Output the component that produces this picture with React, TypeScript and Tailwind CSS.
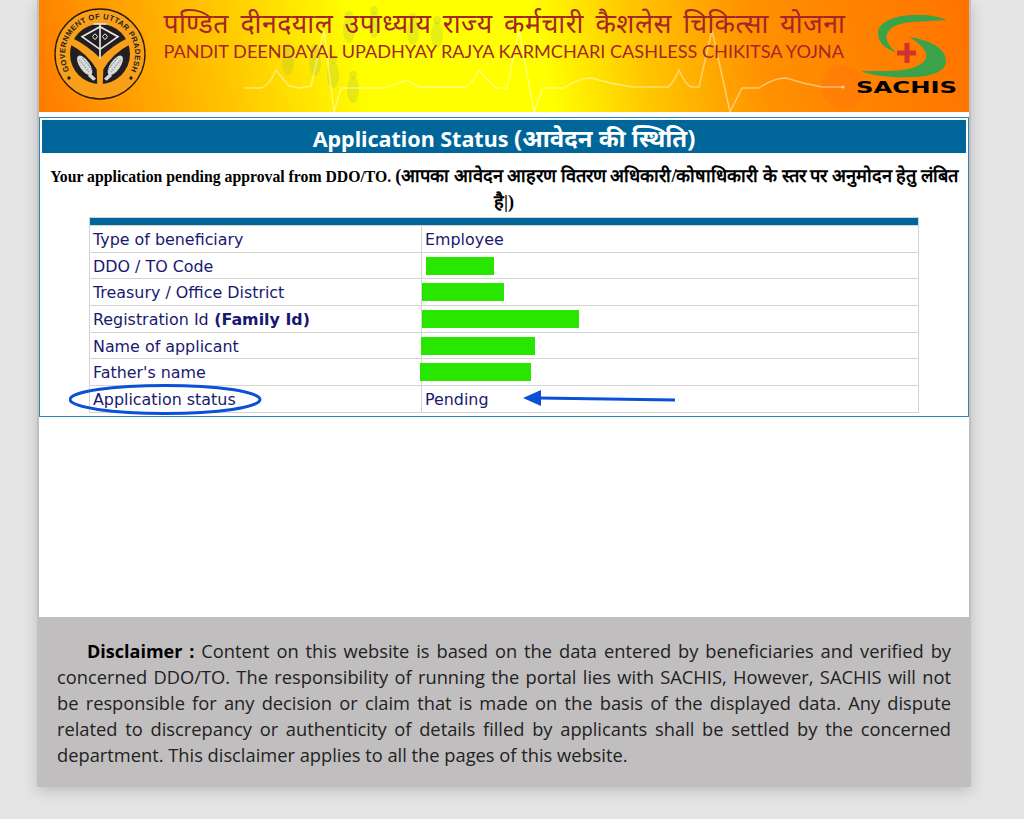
import React from 'react';

const rows = [
  { label: 'Type of beneficiary', value: 'Employee' },
  { label: 'DDO / TO Code', bar: 'ml-[5px] w-[68px]' },
  { label: 'Treasury / Office District', bar: 'ml-[1px] w-[82px]' },
  { label: 'Registration Id', extra: '(Family Id)', bar: 'ml-[1px] w-[157px]' },
  { label: 'Name of applicant', bar: 'w-[114px]' },
  { label: "Father's name", bar: '-ml-[1px] w-[111px]' },
  { label: 'Application status', value: 'Pending' },
];

// faint figures behind the banner title
const people = [
  [249, 62],
  [276, 63],
  [294, 75],
  [314, 90],
  [335, 25],
  [310, 30],
  [374, 32],
  [398, 35],
];

const Emblem = () => (
  <svg viewBox="0 0 276 276" className="relative w-[92px] h-[92px] shrink-0">
    <circle cx="138" cy="138" r="135" fill="#f9a01b" stroke="#2a1a0a" strokeWidth="4" />
    <circle cx="138" cy="138" r="90" fill="#231f20" />
    <defs>
      <path id="ringText" d="M 46 188 A 104.700 104.700 0 1 1 230 188" />
    </defs>
    <text fontFamily="'Liberation Sans', sans-serif" fontWeight="700" fontSize="23" fill="#231f20">
      <textPath href="#ringText" startOffset="0" textLength="433">GOVERNMENT OF UTTAR PRADESH</textPath>
    </text>
    <circle cx="45" cy="210" r="5" fill="#231f20" />
    <circle cx="231" cy="210" r="5" fill="#231f20" />
    <path d="M50 88 Q100 112 138 150 Q176 112 226 88 L234 106 Q176 136 148 184 L146 232 L130 232 L128 184 Q100 136 42 106 Z" fill="#f9a01b" />
    <path d="M84 86 L138 56 L192 86 L138 124 Z" fill="#231f20" stroke="#e8e8e8" strokeWidth="5" />
    <path d="M138 46 L138 152 M118 48 L158 48" stroke="#e8e8e8" strokeWidth="5" fill="none" />
    <path d="M116 86 Q123 70 130 86 Q123 102 116 86 M146 86 Q153 70 160 86 Q153 102 146 86" fill="none" stroke="#e8e8e8" strokeWidth="3" />
    <g fill="#d8d8d8">
      <ellipse cx="92" cy="172" rx="15" ry="34" transform="rotate(-35 92 172)" />
      <ellipse cx="184" cy="172" rx="15" ry="34" transform="rotate(35 184 172)" />
      <path d="M108 194 L126 212 L118 218 L102 204 Z" />
      <path d="M168 194 L150 212 L158 218 L174 204 Z" />
    </g>
    <g stroke="#444" strokeWidth="2.500" strokeDasharray="3 4">
      <path d="M76 156 L106 192" />
      <path d="M86 150 L114 186" />
      <path d="M200 156 L170 192" />
      <path d="M190 150 L162 186" />
    </g>
  </svg>
);

const SachisLogo = () => (
  <svg viewBox="0 0 102 84" className="relative w-[102px] h-[84px] shrink-0 self-start mt-[7px]">
    <path d="M91 5 C78 0 66 -1 54 0 C34 2 22 8 22 19 C22 28 31 35 40 37 C33 31 29 25 31 19 C34 11 44 8 56 7 C68 6 80 6 91 5 Z" fill="#3aa34a" />
    <path d="M53 22 C70 24 90 32 90 46 C90 58 72 62 56 62 C36 63 16 61 5 56 C22 56 42 57 56 53 C68 49 72 44 70 38 C67 31 60 26 53 22 Z" fill="#3aa34a" />
    <path d="M48.500 28 H53.500 V35.500 H60 V40.500 H53.500 V48 H48.500 V40.500 H41 V35.500 H48.500 Z" fill="#d2322d" />
    <text x="0" y="78" fontFamily="'DejaVu Sans', sans-serif" fontWeight="700" fontSize="15" fill="#000" textLength="101" lengthAdjust="spacingAndGlyphs">SACHIS</text>
  </svg>
);

export default function App() {
  return (
    <div className="min-h-[819px] bg-[#e5e5e5] font-['Noto_Sans',sans-serif]">
      <div className="ml-[37px] w-[934px] h-[787px] flex flex-col bg-[#c0bebe] shadow-[0_4px_14px_rgba(0,0,0,0.18)]">
        <div className="mx-[2px] h-[617px] bg-white">
          {/* Banner */}
          <div className="relative h-[112px] overflow-hidden flex justify-between pl-[15px] pr-[11px] pt-[8px] bg-[linear-gradient(78deg,#ff7a00_0%,#ffc000_19%,#ffff00_35%,#ffff00_54%,#ffc800_64%,#ff9000_77%,#ff7300_100%)]">
            <svg viewBox="0 0 930 112" className="absolute inset-0 w-full h-full" fill="none">
              <circle cx="804" cy="87" r="22" fill="#ff4a2a" fillOpacity="0.12" />
              <g fill="#8fb050" fillOpacity="0.22">
                {people.map(([x, y]) => (
                  <g key={`${x}-${y}`}>
                    <circle cx={x} cy={y - 15} r="4" />
                    <ellipse cx={x} cy={y} rx="6" ry="13" />
                  </g>
                ))}
              </g>
              <path d="M205 88 H222 Q230 86 237 70 Q243 78 250 86 L261 88 L272 86 L285 30 L295 112 L302 88 H345 Q358 84 368 80 L380 87 H427 Q433 84 440 70 Q448 80 457 88 H468 L480 30 L495 112 L504 88 H525 Q540 78 552 78 Q572 84 593 87 H629 Q634 84 640 70 Q646 84 652 87 H660 L673 30 L691 112 L703 88 H720 Q735 78 747 78 Q765 84 783 87 H804" stroke="#fff" strokeOpacity="0.45" strokeWidth="1.500" />
              <circle cx="804" cy="87" r="1.500" fill="#fff" fillOpacity="0.6" />
            </svg>
            <Emblem />
            <div className="relative w-[690px] ml-[15px] shrink-0 flex flex-col text-[#a3262a]">
              <div className="text-[26.6px] leading-[30px] tracking-[0.5px] whitespace-nowrap [word-spacing:4px]">पण्डित दीनदयाल उपाध्याय राज्य कर्मचारी कैशलेस चिकित्सा योजना</div>
              <div className="mt-[2px] font-['Lato',sans-serif] text-[18.1px] leading-[22px] whitespace-nowrap">PANDIT DEENDAYAL UPADHYAY RAJYA KARMCHARI CASHLESS CHIKITSA YOJNA</div>
            </div>
            <SachisLogo />
          </div>

          {/* Status box */}
          <div className="relative mt-[5px] h-[300px] border border-[#2f86b5] px-[2px] pt-[2px]">
            <div className="h-[33px] bg-[#006699] text-white text-center text-[21.5px] leading-[36px] font-bold">
              Application Status <span className="text-[24px]">(आवेदन की स्थिति)</span>
            </div>
            <p className="mt-[11px] px-[6px] text-center font-['Liberation_Serif',serif] font-bold text-[15.75px] leading-[26px] text-black">
              Your application pending approval from DDO/TO. <span className="text-[18.2px] leading-[20px]">(आपका आवेदन आहरण वितरण अधिकारी/कोषाधिकारी के स्तर पर अनुमोदन हेतु लंबित है|)</span>
            </p>
            <table className="mt-[1px] ml-[47px] w-[830px] border-collapse font-['DejaVu_Sans',sans-serif] text-[15.9px] text-[#191970]">
              <thead>
                <tr>
                  <th colSpan={2} className="h-[8px] p-0 bg-[#006699] border border-[#d4d4d4]"></th>
                </tr>
              </thead>
              <tbody>
                {rows.map((row) => (
                  <tr key={row.label} className="h-[26.7px]">
                    <td className="w-[332px] px-[3px] pt-[2px] pb-0 border border-[#d4d4d4] leading-[20px]">
                      {row.label}
                      {row.extra && <b> {row.extra}</b>}
                    </td>
                    {row.bar ? (
                      <td className="px-[3px] py-0 border border-[#d4d4d4]">
                        <div className={`h-[18px] -translate-x-[4px] bg-[#28e600] ${row.bar}`} />
                      </td>
                    ) : (
                      <td className="px-[3px] pt-[2px] pb-0 border border-[#d4d4d4] leading-[20px]">{row.value}</td>
                    )}
                  </tr>
                ))}
              </tbody>
            </table>
            {/* hand-drawn annotations over the table */}
            <svg className="absolute left-[29px] top-[266px] w-[610px] h-[34px]" viewBox="0 0 610 34" fill="none">
              <ellipse cx="96" cy="15.500" rx="95" ry="14" stroke="#0b50d8" strokeWidth="3" />
              <path d="M606 16 L470 14" stroke="#0b50d8" strokeWidth="3" />
              <path d="M454 14 L472 6 L472 22 Z" fill="#0b50d8" />
            </svg>
          </div>
        </div>

        {/* Disclaimer */}
        <div className="mt-[1px] px-[20px] pt-[20px] text-[18.3px] leading-[26px] text-[#222] text-justify font-['Open_Sans',sans-serif] [text-indent:30px]">
          <b className="text-black text-[18px]">Disclaimer :</b> Content on this website is based on the data entered by beneficiaries and verified by concerned DDO/TO. The responsibility of running the portal lies with SACHIS, However, SACHIS will not be responsible for any decision or claim that is made on the basis of the displayed data. Any dispute related to discrepancy or authenticity of details filled by applicants shall be settled by the concerned department. This disclaimer applies to all the pages of this website.
        </div>
      </div>
    </div>
  );
}
